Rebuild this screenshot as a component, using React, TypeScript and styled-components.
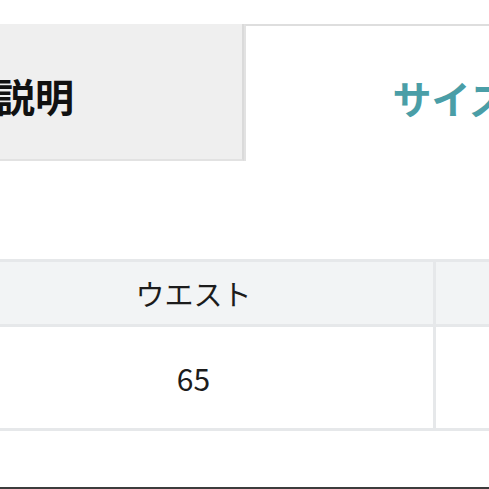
import React from "react";
import styled, { createGlobalStyle } from "styled-components";

const Global = createGlobalStyle`
  html, body {
    margin: 0;
    padding: 0;
    background: #ffffff;
    overflow: hidden;
  }
  body {
    font-family: "Noto Sans CJK JP", "Noto Sans", sans-serif;
    color: #1e1e1e;
  }
`;

const Page = styled.div`
  width: 489px;
  height: 489px;
  overflow: hidden;
  display: flex;
  flex-direction: column;
`;

const TabBar = styled.div`
  display: flex;
  margin-top: 24px;
  margin-left: -250px;
  height: 137px;
  flex-shrink: 0;
`;

const Tab = styled.div<{ $active?: boolean }>`
  box-sizing: border-box;
  width: ${(p) => (p.$active ? "450px" : "494px")};
  flex-shrink: 0;
  display: flex;
  align-items: center;
  justify-content: center;
  padding-top: 6px;
  font-size: 39px;
  font-weight: 700;
  white-space: nowrap;
  background: ${(p) => (p.$active ? "#ffffff" : "#efefef")};
  color: ${(p) => (p.$active ? "#4a9ea7" : "#111111")};
  border-top: ${(p) => (p.$active ? "2px solid #dedede" : "none")};
  border-left: ${(p) => (p.$active ? "2px solid #e2e2e2" : "none")};
  border-right: ${(p) => (p.$active ? "none" : "2px solid #dadada")};
  border-bottom: ${(p) => (p.$active ? "none" : "2px solid #e2e2e2")};
`;

const SizeTable = styled.div`
  display: grid;
  grid-template-columns: 479px 300px;
  grid-template-rows: 62px 101px;
  gap: 3px;
  padding: 3px;
  margin-top: 98px;
  margin-left: -49px;
  background: #e6e8ea;
  flex-shrink: 0;
`;

const Cell = styled.div<{ $head?: boolean }>`
  display: flex;
  align-items: center;
  justify-content: center;
  background: ${(p) => (p.$head ? "#f2f4f5" : "#ffffff")};
  font-size: ${(p) => (p.$head ? "29px" : "30px")};
  font-weight: 400;
  color: #1c1c1c;
  white-space: nowrap;
`;

const BottomRule = styled.div`
  margin-top: 56px;
  height: 2px;
  background: #3c3c3c;
  flex-shrink: 0;
`;

export default function App() {
  return (
    <>
      <Global />
      <Page>
        <TabBar>
          <Tab>商品説明</Tab>
          <Tab $active>サイズ表</Tab>
        </TabBar>
        <SizeTable>
          <Cell $head>ウエスト</Cell>
          <Cell $head />
          <Cell>65</Cell>
          <Cell />
        </SizeTable>
        <BottomRule />
      </Page>
    </>
  );
}
